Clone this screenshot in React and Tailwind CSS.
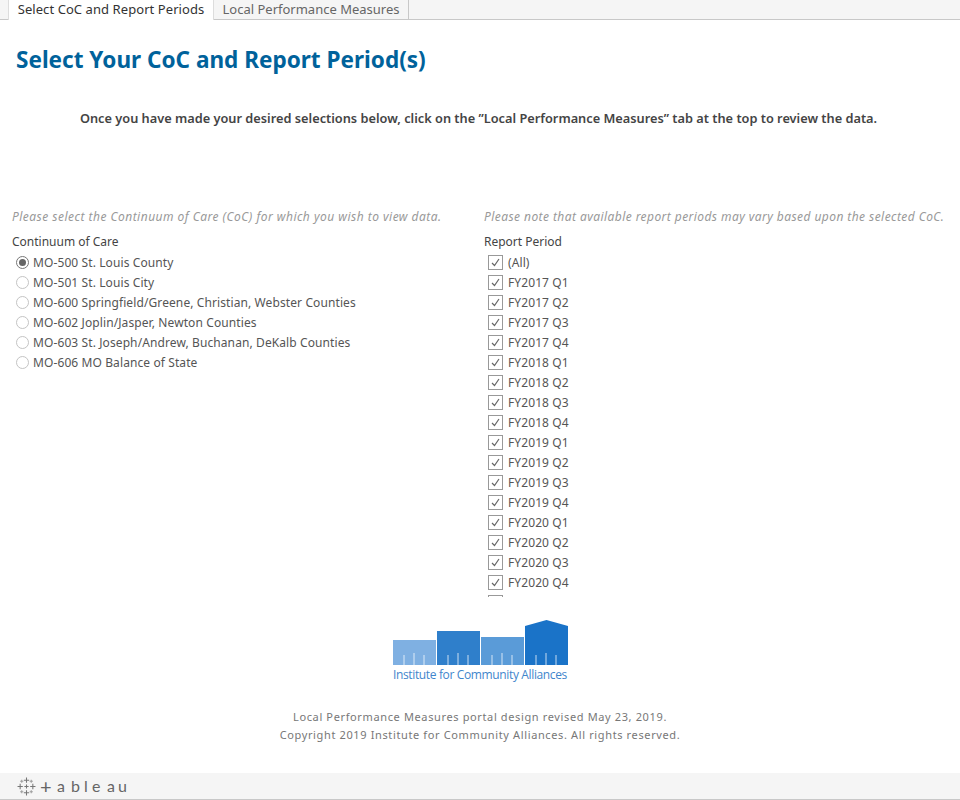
const cocs = [
  "MO-500 St. Louis County",
  "MO-501 St. Louis City",
  "MO-600 Springfield/Greene, Christian, Webster Counties",
  "MO-602 Joplin/Jasper, Newton Counties",
  "MO-603 St. Joseph/Andrew, Buchanan, DeKalb Counties",
  "MO-606 MO Balance of State",
];

const periods = ["(All)"];
[2017, 2018, 2019, 2020].forEach((y) => {
  [1, 2, 3, 4].forEach((q) => periods.push(`FY${y} Q${q}`));
});

const font = { fontFamily: '"Noto Sans", sans-serif' };

const Radio = ({ checked }) => (
  <span className={`w-[13px] h-[13px] rounded-full border flex items-center justify-center shrink-0 bg-white ${checked ? "border-[#777777]" : "border-[#c4c4c4]"}`}>
    {checked && <span className="w-[7px] h-[7px] rounded-full bg-[#666666]" />}
  </span>
);

const Check = () => (
  <span className="w-[15px] h-[15px] border border-[#999999] flex items-center justify-center shrink-0 bg-white">
    <svg width="11" height="11" viewBox="0 0 11 11" fill="none" stroke="#666666" strokeWidth="1.2">
      <path d="M2 6l2.5 2.5L9 2" />
    </svg>
  </span>
);

const Building = ({ color, height, roof }) => (
  <svg width="43" height={height} viewBox={`0 0 43 ${height}`} className="block">
    <path
      d={roof ? `M0 ${height}V6L21.5 0L43 6V${height}Z` : `M0 ${height}V0H43V${height}Z`}
      fill={color}
    />
    {[11, 21, 31].map((x, i) => (
      <path key={x} d={`M${x} ${height}V${height - (i === 1 ? 12 : 10)}`} stroke="#ffffff" strokeOpacity="0.75" strokeWidth="1" />
    ))}
  </svg>
);

const TableauMark = () => (
  <svg width="19" height="19" viewBox="0 0 18 18" stroke="#777777" strokeWidth="1" fill="none">
    <path d="M9 0.5v5M6.5 3h5M9 12.5v5M6.5 15h5M0.5 9h5M3 6.5v5M12.5 9h5M15 6.5v5M9 7v4M7 9h4" />
    <path d="M4.5 2.5v3M3 4h3M13.5 2.5v3M12 4h3M4.5 12.5v3M3 14h3M13.5 12.5v3M12 14h3" strokeOpacity="0.7" />
  </svg>
);

export default function App() {
  return (
    <div className="w-[960px] h-[800px] flex flex-col bg-white overflow-hidden" style={font}>
      {/* Tabs */}
      <div className="h-5 flex pl-2 bg-[#f5f5f5] border-b border-[#c8c8c8] shrink-0">
        <div className="h-5 w-[206px] bg-white border-x border-[#dddddd] text-[13px] tracking-[0.07px] leading-[18px] text-[#333333] text-center">
          Select CoC and Report Periods
        </div>
        <div className="h-[19px] w-[195px] border-r border-[#c8c8c8] text-[13px] leading-[18px] text-[#666666] text-center">
          Local Performance Measures
        </div>
      </div>

      {/* Title */}
      <h1 className="mt-6 ml-4 text-[22.55px] leading-8 font-bold text-[#00629b]">
        Select Your CoC and Report Period(s)
      </h1>
      <p className="mt-[33px] pr-[3px] text-center text-[12.77px] leading-[18px] font-semibold text-[#444444]">
        Once you have made your desired selections below, click on the ”Local Performance Measures” tab at the top to review the data.
      </p>

      {/* Filters */}
      <div className="mt-[81px] flex h-[390px] shrink-0">
        <div className="w-[484px] pl-3">
          <p className="text-[12px] leading-[18px] italic text-[#999999] tracking-[0.48px]">
            Please select the Continuum of Care (CoC) for which you wish to view data.
          </p>
          <p className="mt-[7px] text-[12px] leading-[18px] text-[#444444]">Continuum of Care</p>
          <div className="mt-[1px] flex flex-col">
            {cocs.map((c, i) => (
              <div key={c} className="h-5 flex items-center gap-[4px] pl-1 text-[12px] tracking-[0.1px] text-[#555555]">
                <Radio checked={i === 0} />
                <span className="pt-[2px]">{c}</span>
              </div>
            ))}
          </div>
        </div>
        <div className="flex-1 min-w-0">
          <p className="text-[12px] leading-[18px] italic text-[#999999] tracking-[0.43px] whitespace-nowrap">
            Please note that available report periods may vary based upon the selected CoC.
          </p>
          <p className="mt-[7px] text-[12px] leading-[18px] text-[#444444]">Report Period</p>
          <div className="mt-[1px] h-[345px] overflow-hidden flex flex-col">
            {periods.map((p) => (
              <div key={p} className="h-5 shrink-0 flex items-center gap-[5px] pl-1 text-[12px] tracking-[0.1px] text-[#555555]">
                <Check />
                <span className="pt-[2px]">{p}</span>
              </div>
            ))}
            {/* next row is scrolled out, only the top of its box shows */}
            <div className="h-5 shrink-0 flex items-center pl-1">
              <Check />
            </div>
          </div>
        </div>
      </div>

      {/* Logo */}
      <div className="mt-[22px] flex flex-col items-center">
        <div className="flex items-end gap-px h-[45px]">
          <Building color="#7fb0e2" height={25} />
          <Building color="#2f7fcb" height={34} />
          <Building color="#5a9bd8" height={28} />
          <Building color="#1a73c8" height={45} roof />
        </div>
        <p className="mt-[2px] text-[12px] tracking-[-0.36px] leading-[16px] text-[#3f86cc]" style={{ fontFamily: '"Open Sans", sans-serif' }}>
          Institute for Community Alliances
        </p>
      </div>

      {/* Copyright */}
      <div className="mt-[25px] text-center text-[11px] leading-[18px] text-[#777777] tracking-[0.63px]">
        <p>Local Performance Measures portal design revised May 23, 2019.</p>
        <p>Copyright 2019 Institute for Community Alliances. All rights reserved.</p>
      </div>

      {/* Footer */}
      <div className="mt-auto h-[27px] bg-[#f5f5f5] border-b border-[#c8c8c8] flex items-center pl-[17px] shrink-0">
        <TableauMark />
        <span className="ml-[4px] flex items-center text-[16px] leading-none text-[#666666]" style={{ fontFamily: '"Lato", sans-serif' }}>
          <span className="text-[20px] w-[17px]">+</span>
          <span className="w-[14px]">a</span>
          <span className="w-[13px]">b</span>
          <span className="w-[8px]">l</span>
          <span className="w-[15px]">e</span>
          <span className="w-[11px]">a</span>
          <span>u</span>
        </span>
      </div>
    </div>
  );
}
